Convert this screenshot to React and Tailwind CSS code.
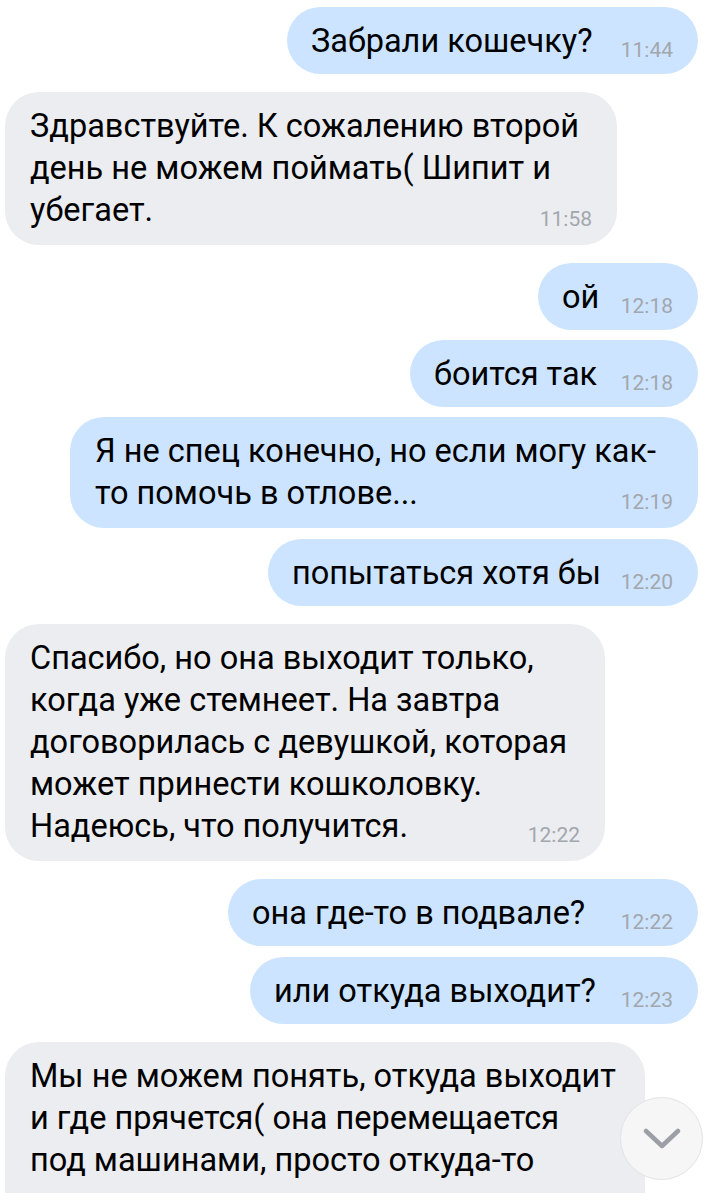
import React from "react";

const FONT = { fontFamily: "Roboto, Inter, 'Noto Sans', sans-serif" };
const TXT = "whitespace-nowrap text-[32.5px] leading-[42px] text-black";

function Time({ t }) {
  return (
    <span className="shrink-0 text-[21px] leading-[24px] text-[#a2a7ad]">{t}</span>
  );
}

function Single({ text, time, w, out = true }) {
  return (
    <div className={out ? "flex justify-end pr-[17px]" : "flex justify-start pl-[5px]"}>
      <div
        className={
          "flex items-end justify-between rounded-[34px] pl-[24px] pr-[25px] pt-[13px] pb-[12px] " +
          (out ? "bg-[#cce4ff]" : "bg-[#ebedf0]")
        }
        style={{ width: w }}
      >
        <span className={TXT}>{text}</span>
        <Time t={time} />
      </div>
    </div>
  );
}

function Multi({ lines, time, w, out = false }) {
  const last = lines[lines.length - 1];
  return (
    <div className={out ? "flex justify-end pr-[17px]" : "flex justify-start pl-[5px]"}>
      <div
        className={
          "flex flex-col rounded-[34px] pl-[25px] pr-[25px] pt-[13px] pb-[14px] " +
          (out ? "bg-[#cce4ff]" : "bg-[#ebedf0]")
        }
        style={{ width: w }}
      >
        {lines.slice(0, -1).map((l, i) => (
          <div key={i} className={TXT}>{l}</div>
        ))}
        <div className="flex items-end justify-between">
          <span className={TXT}>{last}</span>
          <Time t={time} />
        </div>
      </div>
    </div>
  );
}

export default function App() {
  return (
    <div className="relative h-[1200px] w-[715px] overflow-hidden bg-white" style={FONT}>
      <div className="flex flex-col pt-[7px]">
        <Single text="Забрали кошечку?" time="11:44" w={411} />
        <div className="h-[18px]" />
        <Multi
          lines={["Здравствуйте. К сожалению второй", "день не можем поймать( Шипит и", "убегает."]}
          time="11:58"
          w={612}
        />
        <div className="h-[18px]" />
        <Single text="ой" time="12:18" w={160} />
        <div className="h-[10px]" />
        <Single text="боится так" time="12:18" w={288} />
        <div className="h-[10px]" />
        <Multi
          lines={["Я не спец конечно, но если могу как-", "то помочь в отлове..."]}
          time="12:19"
          w={628}
          out
        />
        <div className="h-[11px]" />
        <Single text="попытаться хотя бы" time="12:20" w={430} />
        <div className="h-[18px]" />
        <Multi
          lines={[
            "Спасибо, но она выходит только,",
            "когда уже стемнеет. На завтра",
            "договорилась с девушкой, которая",
            "может принести кошколовку.",
            "Надеюсь, что получится.",
          ]}
          time="12:22"
          w={600}
        />
        <div className="h-[18px]" />
        <Single text="она где-то в подвале?" time="12:22" w={470} />
        <div className="h-[11px]" />
        <Single text="или откуда выходит?" time="12:23" w={448} />
        <div className="h-[18px]" />
        <div className="pl-[5px]">
          <div className="h-[151px] w-[640px] overflow-hidden rounded-t-[34px] bg-[#ebedf0] pl-[25px] pr-[25px] pt-[13px]">
            <div className={TXT}>Мы не можем понять, откуда выходит</div>
            <div className={TXT}>и где прячется( она перемещается</div>
            <div className={TXT}>под машинами, просто откуда-то</div>
          </div>
        </div>
      </div>

      <button className="absolute right-[12px] top-[1097px] flex h-[83px] w-[83px] items-center justify-center rounded-full border border-[#e2e3e5] bg-[#f6f6f7]">
        <svg width="38" height="22" viewBox="0 0 38 22" fill="none">
          <polyline points="3,3 19,18 35,3" stroke="#9ca0a6" strokeWidth="4.5" strokeLinecap="round" strokeLinejoin="round" />
        </svg>
      </button>
    </div>
  );
}
